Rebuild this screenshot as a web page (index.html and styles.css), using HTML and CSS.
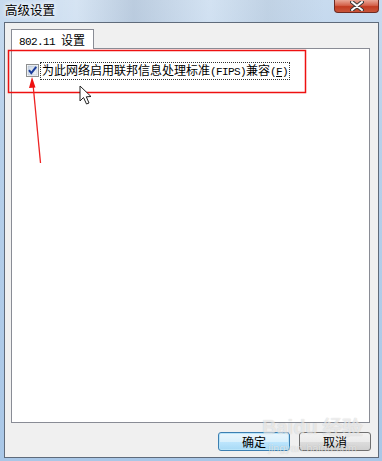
FILE: index.html
```html
<!DOCTYPE html>
<html lang="zh">
<head>
<meta charset="utf-8">
<link rel="stylesheet" href="styles.css">
</head>
<body>
<div class="window">
  <div class="titlebar">
    <span class="title">高级设置</span>
    <div class="close">
      <svg width="14" height="10" viewBox="0 0 14 10"><path d="M2 1 L12 9 M12 1 L2 9" stroke="#3b3b3b" stroke-width="4" stroke-linecap="round"/><path d="M2 1 L12 9 M12 1 L2 9" stroke="#ffffff" stroke-width="2" stroke-linecap="round"/></svg>
    </div>
  </div>
  <div class="client">
    <div class="tabs"><div class="tab"><span class="asc">802.11 </span>设置</div></div>
    <div class="panel">
      <label class="option">
        <span class="checkbox">
          <svg width="13" height="13" viewBox="0 0 13 13">
            <defs><linearGradient id="cb" x1="0" y1="0" x2="1" y2="1"><stop offset="0" stop-color="#cbd6e4"/><stop offset="1" stop-color="#f4f6f9"/></linearGradient></defs>
            <rect x="0.5" y="0.5" width="12" height="12" fill="#ffffff" stroke="#8e8f8f"/>
            <rect x="2" y="2" width="9" height="9" fill="url(#cb)" stroke="#b0bccc" stroke-width="0.6"/>
            <path d="M3 6.2 L5.3 9.2 L10.2 2.8" fill="none" stroke="#1a3c9b" stroke-width="2"/>
          </svg>
        </span>
        <span class="label">为此网络启用联邦信息处理标准<span class="asc">(FIPS)</span>兼容<span class="asc">(<u>F</u>)</span></span>
      </label>
    </div>
    <div class="buttons">
      <button class="btn default">确定</button>
      <button class="btn">取消</button>
    </div>
  </div>
  <div class="watermark"><span class="wm1">Bai<b>du</b> 经验</span><span class="wm2">jingyan.baidu.com</span></div>
  <svg class="annot" width="382" height="461" viewBox="0 0 382 461">
    <rect x="8.5" y="50.5" width="297" height="42" fill="none" stroke="#ee1111" stroke-width="1.5"/>
    <path d="M40.5 163 L33 84" stroke="#ee2222" stroke-width="1.3" fill="none"/>
    <path d="M32 77 L29 88 L35.5 87.5 Z" fill="#ee1111"/>
    <path d="M80 86 L80 101 L83.5 97.5 L86.5 104 L89 103 L86.3 96.8 L91 96.5 Z" fill="#ffffff" stroke="#222" stroke-width="1" stroke-linejoin="round"/>
  </svg>
</div>
</body>
</html>
```
FILE: styles.css
```css
html, body { margin: 0; padding: 0; }
body {
  width: 382px;
  height: 461px;
  overflow: hidden;
  font-family: "Noto Sans CJK SC", "Liberation Sans", sans-serif;
  font-size: 12px;
  color: #000;
}
.window {
  position: relative;
  width: 382px;
  height: 461px;
  box-sizing: border-box;
  padding: 0 3px 3px 4px;
  background: linear-gradient(180deg, #c8dbef 0%, #b7d0ea 30%, #a9c7e7 100%);
  display: flex;
  flex-direction: column;
}
.titlebar {
  height: 22px;
  display: flex;
  justify-content: space-between;
  align-items: flex-start;
  background: linear-gradient(90deg, rgba(255,255,255,0) 0%, rgba(255,255,255,0.25) 20%, rgba(150,160,175,0.25) 35%, rgba(255,255,255,0.2) 55%, rgba(160,170,180,0.18) 70%, rgba(255,255,255,0) 85%);
  margin: 0 -3px 0 -4px;
  padding: 0 3px 0 4px;
}
.title {
  margin-top: 3px;
  margin-left: 1px;
  font-size: 12.5px;
  line-height: 14px;
  text-shadow: 0 0 6px #fff, 0 0 4px #fff;
}
.close {
  width: 45px;
  height: 13px;
  box-sizing: border-box;
  border: 1px solid #6e2a22;
  border-top: none;
  border-radius: 0 0 4px 4px;
  background: linear-gradient(180deg, #e9a797 0%, #d4624b 45%, #c23b21 55%, #c9553a 100%);
  display: flex;
  justify-content: center;
  align-items: center;
}
.client {
  flex: 1;
  box-sizing: border-box;
  border: 1px solid #5f6b7b;
  background: #f0f0f0;
  padding: 6px 0 0 6px;
  display: flex;
  flex-direction: column;
}
.asc {
  font-family: "Liberation Mono", "DejaVu Sans Mono", monospace;
  font-size: 11px;
  letter-spacing: -0.6px;
  white-space: pre;
}
.tabs { display: flex; position: relative; z-index: 1; }
.tab {
  height: 20px;
  box-sizing: border-box;
  padding: 2px 8px 0 7px;
  border: 1px solid #898c95;
  border-bottom: none;
  background: #fff;
  font-size: 12px;
  line-height: 16px;
  margin-bottom: -1px;
  white-space: nowrap;
}
.panel {
  width: 359px;
  height: 375px;
  box-sizing: border-box;
  border: 1px solid #898c95;
  background: #fff;
  padding: 13px 0 0 14px;
}
.option { display: flex; align-items: center; height: 17px; }
.checkbox { width: 13px; height: 13px; display: block; }
.checkbox svg { display: block; }
.label {
  margin-left: 1px;
  padding: 0 1px;
  border: 1px dotted #333;
  line-height: 14px;
  font-size: 12px;
  white-space: nowrap;
}
.label u { text-decoration: underline; }
.buttons {
  display: flex;
  justify-content: flex-end;
  gap: 9px;
  margin-top: 9px;
  padding-right: 7px;
}
.btn {
  width: 72px;
  height: 19px;
  box-sizing: border-box;
  border: 1px solid #707070;
  border-radius: 3px;
  background: linear-gradient(180deg, #f2f2f2 0%, #ebebeb 50%, #dddddd 51%, #cfcfcf 100%);
  font-family: "Noto Sans CJK SC", sans-serif;
  font-size: 12px;
  line-height: 15px;
  padding: 0;
  color: #000;
}
.btn.default {
  border-color: #3c7fb1;
  box-shadow: inset 0 0 0 1px #b9e4f9;
  background: linear-gradient(180deg, #eaf6fd 0%, #d9f0fc 50%, #bee6fd 51%, #a7d9f5 100%);
}
.watermark {
  position: absolute;
  left: 262px;
  top: 416px;
  display: flex;
  flex-direction: column;
  align-items: center;
  color: rgba(255,255,255,0.6);
  text-shadow: 0 0 1px rgba(0,0,0,0.2);
  pointer-events: none;
}
.wm1 { font-family: "Liberation Sans", sans-serif; font-size: 20px; font-weight: bold; line-height: 22px; }
.wm2 { font-family: "Liberation Sans", sans-serif; font-size: 11px; line-height: 12px; margin-top: 4px; }
.annot { position: absolute; left: 0; top: 0; pointer-events: none; }
```
